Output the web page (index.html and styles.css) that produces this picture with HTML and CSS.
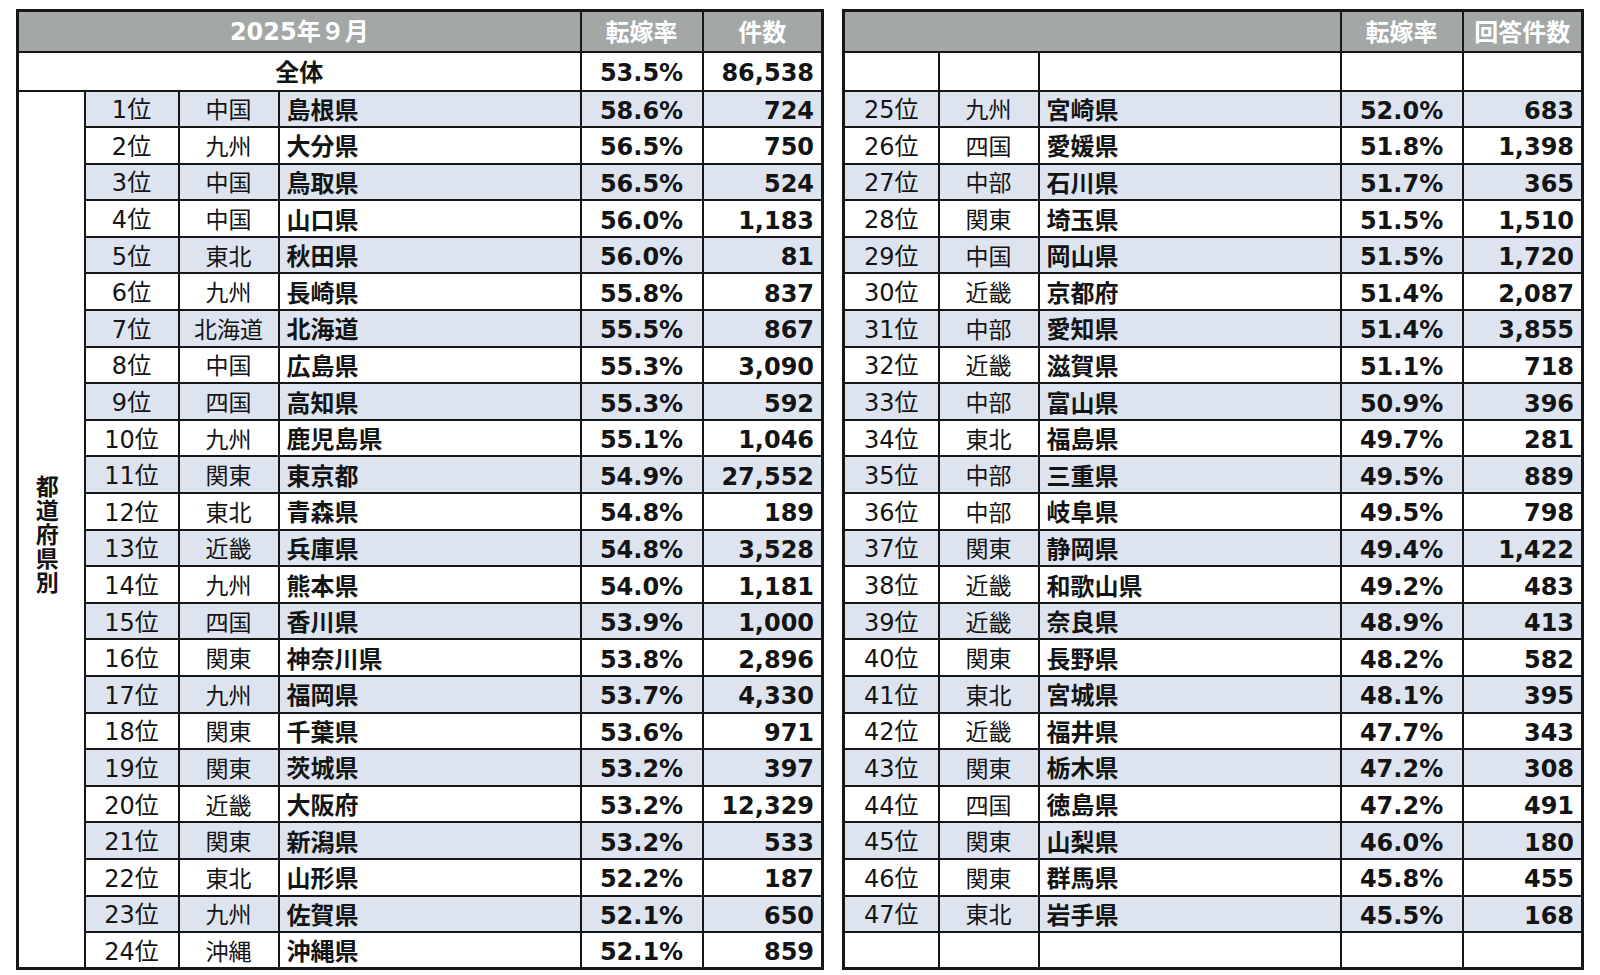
FILE: index.html
```html
<!DOCTYPE html>
<html lang="ja">
<head>
<meta charset="utf-8">
<title>都道府県別 転嫁率 2025年9月</title>
<link rel="stylesheet" href="styles.css">
</head>
<body>
<div class="page">
  <table class="tbl tbl-left">
    <colgroup>
      <col class="c-label"><col class="c-rank"><col class="c-region"><col class="c-name"><col class="c-rate"><col class="c-count">
    </colgroup>
    <thead>
      <tr class="head">
        <th colspan="4" class="month">2025年９月</th><th>転嫁率</th><th>件数</th>
      </tr>
    </thead>
    <tbody>
      <tr class="total"><td colspan="4" class="total-label">全体</td><td class="rate">53.5%</td><td class="count">86,538</td></tr>
      <tr class="alt"><td rowspan="24" class="label"><span class="vtext">都道府県別</span></td><td class="rank">1位</td><td class="region">中国</td><td class="name">島根県</td><td class="rate">58.6%</td><td class="count">724</td></tr>
      <tr><td class="rank">2位</td><td class="region">九州</td><td class="name">大分県</td><td class="rate">56.5%</td><td class="count">750</td></tr>
      <tr class="alt"><td class="rank">3位</td><td class="region">中国</td><td class="name">鳥取県</td><td class="rate">56.5%</td><td class="count">524</td></tr>
      <tr><td class="rank">4位</td><td class="region">中国</td><td class="name">山口県</td><td class="rate">56.0%</td><td class="count">1,183</td></tr>
      <tr class="alt"><td class="rank">5位</td><td class="region">東北</td><td class="name">秋田県</td><td class="rate">56.0%</td><td class="count">81</td></tr>
      <tr><td class="rank">6位</td><td class="region">九州</td><td class="name">長崎県</td><td class="rate">55.8%</td><td class="count">837</td></tr>
      <tr class="alt"><td class="rank">7位</td><td class="region">北海道</td><td class="name">北海道</td><td class="rate">55.5%</td><td class="count">867</td></tr>
      <tr><td class="rank">8位</td><td class="region">中国</td><td class="name">広島県</td><td class="rate">55.3%</td><td class="count">3,090</td></tr>
      <tr class="alt"><td class="rank">9位</td><td class="region">四国</td><td class="name">高知県</td><td class="rate">55.3%</td><td class="count">592</td></tr>
      <tr><td class="rank">10位</td><td class="region">九州</td><td class="name">鹿児島県</td><td class="rate">55.1%</td><td class="count">1,046</td></tr>
      <tr class="alt"><td class="rank">11位</td><td class="region">関東</td><td class="name">東京都</td><td class="rate">54.9%</td><td class="count">27,552</td></tr>
      <tr><td class="rank">12位</td><td class="region">東北</td><td class="name">青森県</td><td class="rate">54.8%</td><td class="count">189</td></tr>
      <tr class="alt"><td class="rank">13位</td><td class="region">近畿</td><td class="name">兵庫県</td><td class="rate">54.8%</td><td class="count">3,528</td></tr>
      <tr><td class="rank">14位</td><td class="region">九州</td><td class="name">熊本県</td><td class="rate">54.0%</td><td class="count">1,181</td></tr>
      <tr class="alt"><td class="rank">15位</td><td class="region">四国</td><td class="name">香川県</td><td class="rate">53.9%</td><td class="count">1,000</td></tr>
      <tr><td class="rank">16位</td><td class="region">関東</td><td class="name">神奈川県</td><td class="rate">53.8%</td><td class="count">2,896</td></tr>
      <tr class="alt"><td class="rank">17位</td><td class="region">九州</td><td class="name">福岡県</td><td class="rate">53.7%</td><td class="count">4,330</td></tr>
      <tr><td class="rank">18位</td><td class="region">関東</td><td class="name">千葉県</td><td class="rate">53.6%</td><td class="count">971</td></tr>
      <tr class="alt"><td class="rank">19位</td><td class="region">関東</td><td class="name">茨城県</td><td class="rate">53.2%</td><td class="count">397</td></tr>
      <tr><td class="rank">20位</td><td class="region">近畿</td><td class="name">大阪府</td><td class="rate">53.2%</td><td class="count">12,329</td></tr>
      <tr class="alt"><td class="rank">21位</td><td class="region">関東</td><td class="name">新潟県</td><td class="rate">53.2%</td><td class="count">533</td></tr>
      <tr><td class="rank">22位</td><td class="region">東北</td><td class="name">山形県</td><td class="rate">52.2%</td><td class="count">187</td></tr>
      <tr class="alt"><td class="rank">23位</td><td class="region">九州</td><td class="name">佐賀県</td><td class="rate">52.1%</td><td class="count">650</td></tr>
      <tr><td class="rank">24位</td><td class="region">沖縄</td><td class="name">沖縄県</td><td class="rate">52.1%</td><td class="count">859</td></tr>
    </tbody>
  </table>

  <table class="tbl tbl-right">
    <colgroup>
      <col class="c-rank-r"><col class="c-region"><col class="c-name"><col class="c-rate"><col class="c-count">
    </colgroup>
    <thead>
      <tr class="head">
        <th colspan="3"></th><th>転嫁率</th><th>回答件数</th>
      </tr>
    </thead>
    <tbody>
      <tr class="total"><td></td><td></td><td></td><td></td><td></td></tr>
      <tr class="alt"><td class="rank">25位</td><td class="region">九州</td><td class="name">宮崎県</td><td class="rate">52.0%</td><td class="count">683</td></tr>
      <tr><td class="rank">26位</td><td class="region">四国</td><td class="name">愛媛県</td><td class="rate">51.8%</td><td class="count">1,398</td></tr>
      <tr class="alt"><td class="rank">27位</td><td class="region">中部</td><td class="name">石川県</td><td class="rate">51.7%</td><td class="count">365</td></tr>
      <tr><td class="rank">28位</td><td class="region">関東</td><td class="name">埼玉県</td><td class="rate">51.5%</td><td class="count">1,510</td></tr>
      <tr class="alt"><td class="rank">29位</td><td class="region">中国</td><td class="name">岡山県</td><td class="rate">51.5%</td><td class="count">1,720</td></tr>
      <tr><td class="rank">30位</td><td class="region">近畿</td><td class="name">京都府</td><td class="rate">51.4%</td><td class="count">2,087</td></tr>
      <tr class="alt"><td class="rank">31位</td><td class="region">中部</td><td class="name">愛知県</td><td class="rate">51.4%</td><td class="count">3,855</td></tr>
      <tr><td class="rank">32位</td><td class="region">近畿</td><td class="name">滋賀県</td><td class="rate">51.1%</td><td class="count">718</td></tr>
      <tr class="alt"><td class="rank">33位</td><td class="region">中部</td><td class="name">富山県</td><td class="rate">50.9%</td><td class="count">396</td></tr>
      <tr><td class="rank">34位</td><td class="region">東北</td><td class="name">福島県</td><td class="rate">49.7%</td><td class="count">281</td></tr>
      <tr class="alt"><td class="rank">35位</td><td class="region">中部</td><td class="name">三重県</td><td class="rate">49.5%</td><td class="count">889</td></tr>
      <tr><td class="rank">36位</td><td class="region">中部</td><td class="name">岐阜県</td><td class="rate">49.5%</td><td class="count">798</td></tr>
      <tr class="alt"><td class="rank">37位</td><td class="region">関東</td><td class="name">静岡県</td><td class="rate">49.4%</td><td class="count">1,422</td></tr>
      <tr><td class="rank">38位</td><td class="region">近畿</td><td class="name">和歌山県</td><td class="rate">49.2%</td><td class="count">483</td></tr>
      <tr class="alt"><td class="rank">39位</td><td class="region">近畿</td><td class="name">奈良県</td><td class="rate">48.9%</td><td class="count">413</td></tr>
      <tr><td class="rank">40位</td><td class="region">関東</td><td class="name">長野県</td><td class="rate">48.2%</td><td class="count">582</td></tr>
      <tr class="alt"><td class="rank">41位</td><td class="region">東北</td><td class="name">宮城県</td><td class="rate">48.1%</td><td class="count">395</td></tr>
      <tr><td class="rank">42位</td><td class="region">近畿</td><td class="name">福井県</td><td class="rate">47.7%</td><td class="count">343</td></tr>
      <tr class="alt"><td class="rank">43位</td><td class="region">関東</td><td class="name">栃木県</td><td class="rate">47.2%</td><td class="count">308</td></tr>
      <tr><td class="rank">44位</td><td class="region">四国</td><td class="name">徳島県</td><td class="rate">47.2%</td><td class="count">491</td></tr>
      <tr class="alt"><td class="rank">45位</td><td class="region">関東</td><td class="name">山梨県</td><td class="rate">46.0%</td><td class="count">180</td></tr>
      <tr><td class="rank">46位</td><td class="region">関東</td><td class="name">群馬県</td><td class="rate">45.8%</td><td class="count">455</td></tr>
      <tr class="alt"><td class="rank">47位</td><td class="region">東北</td><td class="name">岩手県</td><td class="rate">45.5%</td><td class="count">168</td></tr>
      <tr><td></td><td></td><td></td><td></td><td></td></tr>
    </tbody>
  </table>
</div>
</body>
</html>
```

FILE: styles.css
```css
html, body {
  margin: 0;
  padding: 0;
  background: #ffffff;
}

.page {
  display: flex;
  align-items: flex-start;
  gap: 18px;
  padding: 9px 0 0 16px;
  font-family: "DejaVu Sans", "Noto Sans CJK JP", sans-serif;
  color: #141414;
}

.tbl {
  border-collapse: collapse;
  table-layout: fixed;
  border: 3px solid #161616;
}

.tbl-left { width: 805px; }
.tbl-right { width: 736px; }

.c-label { width: 67px; }
.c-rank { width: 94px; }
.c-rank-r { width: 95px; }
.c-region { width: 100px; }
.c-name { width: 302px; }
.c-rate { width: 122px; }
.c-count { width: 120px; }

.tbl th,
.tbl td {
  border: 2px solid #161616;
  padding: 0;
  white-space: nowrap;
  overflow: hidden;
  line-height: 1;
  vertical-align: middle;
}

.tbl tr.head { height: 41px; }
.tbl tbody tr { height: 36.6px; }
.tbl tbody tr.total { height: 39px; }

.tbl .head th {
  background: #a3a8a6;
  color: #ffffff;
  font-family: "Noto Sans CJK JP", "DejaVu Sans", sans-serif;
  font-weight: 700;
  font-size: 24px;
  text-align: center;
}

.tbl .head th.month {
  font-family: "DejaVu Sans", "Noto Sans CJK JP", sans-serif;
  padding-top: 2px;
}

.tbl tr.alt td { background: #dde4ef; }
.tbl tr.alt td.label { background: #ffffff; }

.tbl td.total-label {
  text-align: center;
  font-family: "Noto Sans CJK JP", sans-serif;
  font-weight: 700;
  font-size: 24px;
}

.tbl td.label {
  background: #ffffff;
  text-align: center;
  vertical-align: middle;
}

.vtext {
  display: inline-block;
  writing-mode: vertical-rl;
  text-orientation: upright;
  font-family: "Noto Sans CJK JP", sans-serif;
  font-weight: 700;
  font-size: 23px;
  line-height: 1;
  letter-spacing: 1px;
  margin: 14px 9px 0 0;
}

.tbl td.rank {
  text-align: center;
  font-size: 24px;
  font-weight: 400;
  padding-top: 3px;
}

.tbl td.region {
  text-align: center;
  font-family: "Noto Sans CJK JP", sans-serif;
  font-size: 23px;
  font-weight: 400;
}

.tbl td.name {
  text-align: left;
  padding-left: 7px;
  font-family: "Noto Sans CJK JP", sans-serif;
  font-size: 24px;
  font-weight: 700;
}

.tbl td.rate {
  text-align: center;
  font-size: 24px;
  font-weight: 700;
  padding-top: 4px;
}

.tbl td.count {
  text-align: right;
  padding-right: 7px;
  font-size: 24px;
  font-weight: 700;
  padding-top: 4px;
}
```
